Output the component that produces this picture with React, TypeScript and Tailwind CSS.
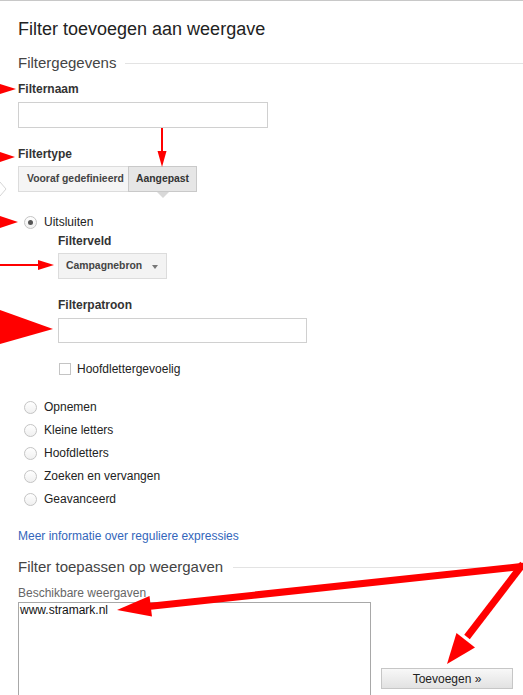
import React from 'react';

const radios = ['Opnemen', 'Kleine letters', 'Hoofdletters', 'Zoeken en vervangen', 'Geavanceerd'];

function Radio({ checked = false }: { checked?: boolean }) {
  return (
    <span className="flex h-[13px] w-[13px] shrink-0 items-center justify-center rounded-full border border-[#c4c4c4] bg-gradient-to-b from-white to-[#f0f0f0]">
      {checked && <span className="h-[5px] w-[5px] rounded-full bg-[#555]" />}
    </span>
  );
}

// red annotation arrows drawn over the form
function Arrows() {
  return (
    <svg className="pointer-events-none absolute left-0 top-0" width="523" height="695" viewBox="0 0 523 695">
      <polyline points="0,181 6,188 0,195" fill="#fff" stroke="#d6d6d6" strokeWidth="1" />
      <polygon points="0,83 16,88 0,93" fill="#f00" />
      <polygon points="0,151 15,156 0,161" fill="#f00" />
      <line x1="162" y1="127" x2="162" y2="151" stroke="#f00" strokeWidth="2" />
      <polygon points="157.5,150 166.5,150 162,166" fill="#f00" />
      <polygon points="0,215 18,221 0,227" fill="#f00" />
      <line x1="0" y1="264" x2="40" y2="264" stroke="#f00" strokeWidth="2" />
      <polygon points="38,259 54,264 38,269" fill="#f00" />
      <polygon points="0,309 53,328 0,343" fill="#f00" />
      <line x1="526" y1="565" x2="148" y2="605.5" stroke="#f00" strokeWidth="7" />
      <polygon points="117,609 152,615.5 149.5,595" fill="#f00" />
      <line x1="523" y1="563" x2="467" y2="636" stroke="#f00" strokeWidth="7" />
      <polygon points="447,663 475,646.5 456.5,632" fill="#f00" />
    </svg>
  );
}

export default function App() {
  return (
    <div className="relative h-[695px] w-[523px] overflow-hidden border-t border-[#c8c8c8] bg-white font-['Liberation_Sans',Arial,sans-serif] text-[#222]">
      <div className="pl-[18px]">
        {/* Title */}
        <h1 className="pt-[16px] text-[18px] leading-[24px] text-[#222]">Filter toevoegen aan weergave</h1>

        {/* Filtergegevens */}
        <div className="mt-[12px] flex items-center">
          <span className="text-[15px] leading-[20px] text-[#444]">Filtergegevens</span>
          <span className="ml-[9px] mt-[1px] h-px flex-1 bg-[#e3e3e3]" />
        </div>

        <div className="mt-[8px] text-[12px] font-bold leading-[16px] text-[#333]">Filternaam</div>
        <div className="mt-[5px] h-[26px] w-[250px] border border-[#d0d0d0]" />

        <div className="mt-[18px] text-[12px] font-bold leading-[16px] text-[#333]">Filtertype</div>
        <div className="mt-[4px] flex h-[26px]">
          <div className="flex w-[111px] items-center whitespace-nowrap border border-[#dcdcdc] bg-[#f5f5f5] pl-[8px] text-[10.4px] font-bold text-[#444]">
            Vooraf gedefinieerd
          </div>
          <div className="relative -ml-px flex w-[69px] items-center justify-center whitespace-nowrap border border-[#c9c9c9] bg-[#e6e6e6] text-[10.4px] font-bold text-[#333]">
            Aangepast
            <span className="absolute left-[28px] top-[25px] h-0 w-0 border-x-[6px] border-t-[6px] border-x-transparent border-t-[#d8d8d8]" />
          </div>
        </div>

        {/* Uitsluiten */}
        <div className="mt-[22px] flex items-center leading-[16px]">
          <span className="ml-[6px]">
            <Radio checked />
          </span>
          <span className="ml-[7px] text-[12px] text-[#222]">Uitsluiten</span>
        </div>

        <div className="pl-[40px]">
          <div className="mt-[3px] text-[12px] font-bold leading-[16px] text-[#333]">Filterveld</div>
          <div className="mt-[4px] flex h-[26px] w-[109px] items-center justify-between border border-[#dcdcdc] bg-[#f3f3f3] pl-[7px] pr-[8px] text-[10.4px] font-bold text-[#444]">
            <span>Campagnebron</span>
            <span className="mt-[1px] h-0 w-0 border-x-[3.5px] border-t-[4px] border-x-transparent border-t-[#777]" />
          </div>

          <div className="mt-[18px] text-[12px] font-bold leading-[16px] text-[#333]">Filterpatroon</div>
          <div className="mt-[5px] h-[25px] w-[249px] border border-[#d0d0d0]" />

          <div className="mt-[18px] flex items-center leading-[16px]">
            <span className="ml-px h-[12px] w-[12px] border border-[#c4c4c4] bg-white" />
            <span className="ml-[6px] text-[12px] text-[#222]">Hoofdlettergevoelig</span>
          </div>
        </div>

        {/* other filter types */}
        <div className="mt-[19px]">
          {radios.map((r) => (
            <div key={r} className="flex h-[23px] items-center leading-[23px]">
              <span className="ml-[6px]">
                <Radio />
              </span>
              <span className="ml-[7px] text-[12px] text-[#222]">{r}</span>
            </div>
          ))}
        </div>

        <div className="mt-[17px] text-[12px] leading-[16px] text-[#3366bb]">Meer informatie over reguliere expressies</div>

        {/* Filter toepassen */}
        <div className="mt-[13px] flex items-center">
          <span className="text-[15px] leading-[20px] text-[#444]">Filter toepassen op weergaven</span>
          <span className="ml-[10px] mt-px h-px flex-1 bg-[#e3e3e3]" />
        </div>

        <div className="mt-[8px] text-[12px] leading-[16px] text-[#666]">Beschikbare weergaven</div>
        <div className="mt-px flex items-start gap-[10px]">
          <div className="h-[120px] w-[353px] border border-[#a8a8a8] pl-[1px] text-[12px] leading-[14px] text-[#111]">
            www.stramark.nl
          </div>
          <div className="mt-[66px] flex h-[21px] w-[132px] items-center justify-center border border-[#c6c6c6] bg-gradient-to-b from-[#f8f8f8] to-[#e2e2e2] text-[12px] text-[#222]">
            Toevoegen »
          </div>
        </div>
      </div>
      <Arrows />
    </div>
  );
}
